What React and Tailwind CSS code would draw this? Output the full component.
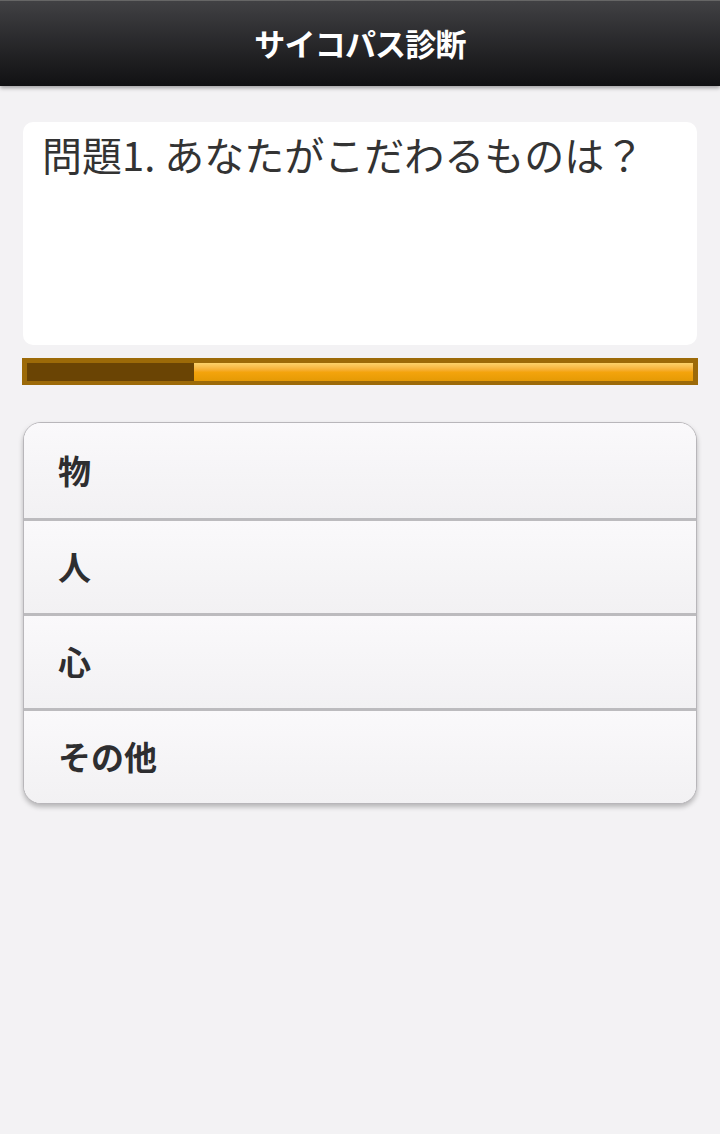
import React from 'react';

const choices = ['物', '人', '心', 'その他'];

const App = () => {
  const progress = 25;

  return (
    <div
      className="min-h-[1134px] bg-[#f3f2f4]"
      style={{ fontFamily: '"Noto Sans CJK JP", "Noto Sans", sans-serif' }}
    >
      <header className="h-[86px] flex items-center justify-center bg-gradient-to-b from-[#414144] to-[#111113] border-t border-[#666] shadow-[0_2px_4px_rgba(0,0,0,0.35)]">
        <h1 className="text-white text-[31px] font-bold tracking-tight">サイコパス診断</h1>
      </header>

      <div className="px-[23px] pt-[36px]">
        <div className="bg-white rounded-[10px] h-[223px] pl-[19px] pt-[2px]">
          <p className="text-[#333] text-[40px] leading-[60px]">問題1. あなたがこだわるものは？</p>
        </div>

        <div className="mt-[13px] -mx-px h-[27px] bg-[#9c6a08] p-[5px] pb-[4px]">
          <div className="h-full flex bg-gradient-to-b from-[#fbd26a] via-[#f4a40c] to-[#e59a05]">
            <div className="h-full bg-[#6a4404]" style={{ width: `${progress}%` }} />
          </div>
        </div>

        <div className="mt-[37px] rounded-[18px] border border-[#b8b6ba] shadow-[0_3px_5px_rgba(0,0,0,0.25)] overflow-hidden bg-[#f8f7f9]">
          {choices.map((c, i) => (
            <div
              key={c}
              className={`h-[95px] flex items-center pl-[34px] bg-gradient-to-b from-[#faf9fb] to-[#f2f1f3] ${i > 0 ? 'border-t-[3px] border-[#bcbbbe]' : ''}`}
            >
              <span className="text-[#2e2e30] text-[33px] font-bold">{c}</span>
            </div>
          ))}
        </div>
      </div>
    </div>
  );
};

export default App;
